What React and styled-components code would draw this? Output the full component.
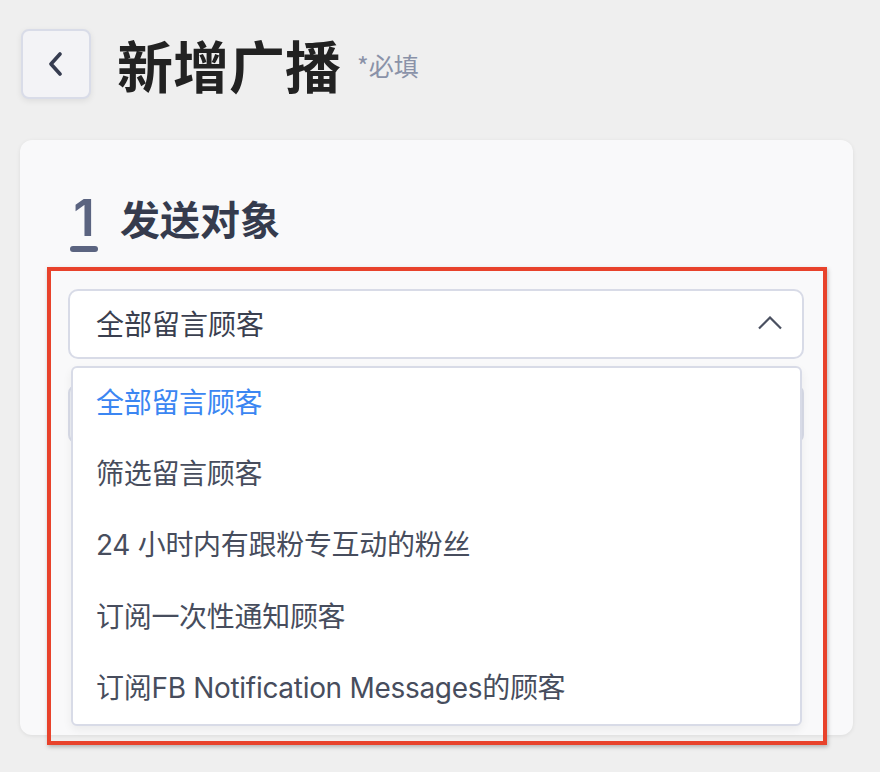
import styled, { createGlobalStyle } from "styled-components";

const GlobalStyle = createGlobalStyle`
  html, body {
    margin: 0;
    padding: 0;
    background: #efefef;
    font-family: Inter, "Noto Sans CJK SC", sans-serif;
  }
  * { box-sizing: border-box; }
`;

const Page = styled.div`
  padding: 29px 27px 0 20px;
  width: 880px;
  height: 772px;
  overflow: hidden;
`;

const Header = styled.div`
  display: flex;
  align-items: center;
  padding-left: 1px;
`;

const BackButton = styled.button`
  display: flex;
  align-items: center;
  justify-content: center;
  width: 70px;
  height: 70px;
  padding: 0;
  background: #f3f3f6;
  border: 2px solid #d9dce8;
  border-radius: 8px;
  box-shadow: 0 2px 6px rgba(0, 0, 0, 0.08);
  color: #363c50;
`;

const Title = styled.h1`
  margin: 0 0 0 26px;
  font-family: "Noto Sans CJK SC", sans-serif;
  font-size: 56px;
  font-weight: 700;
  line-height: 1;
  color: #222;
`;

const Required = styled.span`
  margin-left: 16px;
  margin-top: 2px;
  font-family: "Noto Sans CJK SC", sans-serif;
  font-size: 25px;
  color: #8a92a8;
`;

const Card = styled.div`
  position: relative;
  margin-top: 41px;
  min-height: 595px;
  padding: 46px 49px 40px 48px;
  background: #f9f9fa;
  border-radius: 12px;
  box-shadow: 0 1px 4px rgba(0, 0, 0, 0.08);
`;

const SectionHead = styled.div`
  display: flex;
  align-items: flex-start;
  gap: 22px;
`;

const StepNumber = styled.div`
  display: flex;
  flex-direction: column;
  align-items: center;
  width: 28px;
  margin: 5px 0 0 2px;
  font-family: Inter, sans-serif;
  font-size: 51px;
  font-weight: 600;
  line-height: 54px;
  color: #5b6480;

  &::after {
    content: "";
    width: 28px;
    height: 6px;
    margin-top: 1px;
    border-radius: 3px;
    background: #5b6480;
  }
`;

const SectionTitle = styled.h2`
  margin: 8px 0 0;
  font-family: "Noto Sans CJK SC", sans-serif;
  font-size: 40px;
  font-weight: 700;
  line-height: 1.2;
  color: #353b4d;
`;

const Field = styled.div`
  position: relative;
  margin-top: 37px;
`;

const Select = styled.div`
  display: flex;
  align-items: center;
  justify-content: space-between;
  height: 70px;
  padding: 0 20px 2px 26px;
  background: #fff;
  border: 2px solid #d8dbe7;
  border-radius: 10px;
  font-family: Inter, "Noto Sans CJK SC", sans-serif;
  font-size: 28px;
  color: #3a3f4f;
`;

const Menu = styled.ul`
  position: absolute;
  top: 77px;
  left: 3px;
  right: 2px;
  margin: 0;
  padding: 0;
  list-style: none;
  background: #fff;
  border: 2px solid #d8dbe7;
  border-radius: 6px;
  box-shadow: 0 4px 10px rgba(0, 0, 0, 0.06);
  z-index: 2;
`;

const Option = styled.li`
  display: flex;
  align-items: center;
  height: 71.2px;
  padding: 0 0 5px 23px;
  font-size: 28px;
  letter-spacing: -0.3px;
  color: ${(p) => (p.$active ? "#3b86f2" : "#474d5d")};
`;

const HiddenBox = styled.div`
  margin-top: 26px;
  height: 58px;
  background: #eceef3;
  border: 2px solid #d8dbe7;
  border-radius: 8px;
`;

const Highlight = styled.div`
  position: absolute;
  top: 127px;
  left: 27px;
  width: 780px;
  height: 478px;
  border: 4px solid #e8422b;
  box-shadow: 1px 2px 4px rgba(0, 0, 0, 0.25);
  pointer-events: none;
  z-index: 3;
`;

const options = [
  "全部留言顾客",
  "筛选留言顾客",
  "24 小时内有跟粉专互动的粉丝",
  "订阅一次性通知顾客",
  "订阅FB Notification Messages的顾客",
];

export default function App() {
  return (
    <>
      <GlobalStyle />
      <Page>
        <Header>
          <BackButton>
            <svg width="18" height="24" viewBox="0 0 18 24" fill="none">
              <path d="M13 2 L4 12 L13 22" stroke="currentColor" strokeWidth="3.6" strokeLinecap="round" strokeLinejoin="round" />
            </svg>
          </BackButton>
          <Title>新增广播</Title>
          <Required>*必填</Required>
        </Header>
        <Card>
          <SectionHead>
            <StepNumber>1</StepNumber>
            <SectionTitle>发送对象</SectionTitle>
          </SectionHead>
          <Field>
            <Select>
              <span>全部留言顾客</span>
              <svg width="24" height="14" viewBox="0 0 24 14" fill="none">
                <path d="M1 12.5 L12 1.5 L23 12.5" stroke="#4a5060" strokeWidth="2.2" />
              </svg>
            </Select>
            <Menu>
              {options.map((o, i) => (
                <Option key={o} $active={i === 0}>{o}</Option>
              ))}
            </Menu>
            <HiddenBox />
          </Field>
          <Highlight />
        </Card>
      </Page>
    </>
  );
}
